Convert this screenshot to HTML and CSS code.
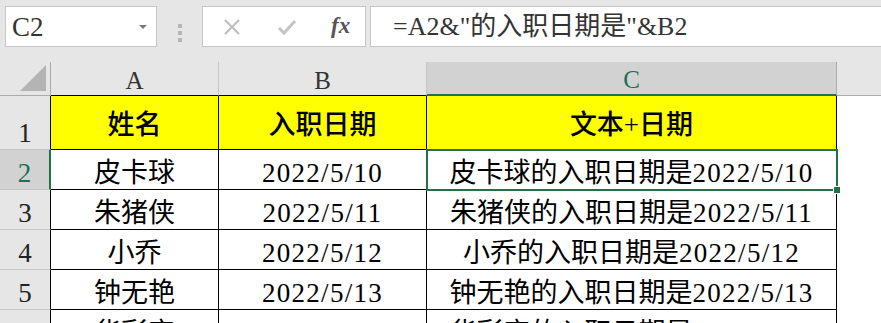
FILE: index.html
```html
<!DOCTYPE html>
<html lang="zh-CN">
<head>
    <meta charset="UTF-8">
    <meta name="viewport" content="width=device-width, initial-scale=1.0">
    <title>文本+日期</title>
    <link rel="stylesheet" href="styles.css">
</head>
<body>
    <!-- formula bar -->
    <div class="formula-bar">
        <div class="name-box">
            <span class="cell-ref">C2</span>
            <span class="drop"></span>
        </div>
        <div class="grip"><i></i><i></i><i></i></div>
        <div class="btn-box">
            <svg class="ico" width="18" height="18" viewBox="0 0 18 18">
                <path d="M2 2 L16 16 M16 2 L2 16" stroke="#bdbdbd" stroke-width="2" fill="none"/>
            </svg>
            <svg class="ico" width="20" height="18" viewBox="0 0 20 18">
                <path d="M2 10 L7 15 L18 3" stroke="#c4c4c4" stroke-width="3" fill="none"/>
            </svg>
            <span class="fx">fx</span>
        </div>
        <div class="formula">=A2&amp;"的入职日期是"&amp;B2</div>
    </div>

    <!-- sheet -->
    <div class="sheet">
        <div class="corner"><span class="tri"></span></div>
        <div class="ch">A</div>
        <div class="ch">B</div>
        <div class="ch active">C</div>
        <div class="ch rest"></div>

        <div class="rh">1</div>
        <div class="cell head">姓名</div>
        <div class="cell head">入职日期</div>
        <div class="cell head">文本+日期</div>
        <div class="blank"></div>

        <div class="rh active">2</div>
        <div class="cell">皮卡球</div>
        <div class="cell"><span class="num">2022/5/10</span></div>
        <div class="cell sel">皮卡球的入职日期是<span class="num">2022/5/10</span></div>
        <div class="blank"></div>

        <div class="rh">3</div>
        <div class="cell">朱猪侠</div>
        <div class="cell"><span class="num">2022/5/11</span></div>
        <div class="cell">朱猪侠的入职日期是<span class="num">2022/5/11</span></div>
        <div class="blank"></div>

        <div class="rh">4</div>
        <div class="cell">小乔</div>
        <div class="cell"><span class="num">2022/5/12</span></div>
        <div class="cell">小乔的入职日期是<span class="num">2022/5/12</span></div>
        <div class="blank"></div>

        <div class="rh">5</div>
        <div class="cell">钟无艳</div>
        <div class="cell"><span class="num">2022/5/13</span></div>
        <div class="cell">钟无艳的入职日期是<span class="num">2022/5/13</span></div>
        <div class="blank"></div>

        <div class="rh">6</div>
        <div class="cell">华彩宝</div>
        <div class="cell"><span class="num">2022/5/14</span></div>
        <div class="cell">华彩宝的入职日期是<span class="num">2022/5/14</span></div>
        <div class="blank"></div>
    </div>
</body>
</html>
```

FILE: styles.css
```css
body {
    margin: 0;
    background: #e6e6e6;
    font-family: "Liberation Serif", "Noto Sans CJK SC", serif;
    overflow: hidden;
}

/* formula bar */
.formula-bar {
    display: flex;
    height: 62px;
    padding: 6px 0 0 5px;
    box-sizing: border-box;
}
.name-box {
    width: 152px;
    height: 41px;
    box-sizing: border-box;
    background: #fff;
    border: 1px solid #c6c6c6;
    display: flex;
    align-items: center;
    padding: 2px 9px 0 6px;
}
.cell-ref {
    flex: 1;
    font-size: 27px;
    color: #333;
}
.drop {
    width: 0;
    height: 0;
    border-left: 4px solid transparent;
    border-right: 4px solid transparent;
    border-top: 4px solid #7a7a7a;
    margin-top: -2px;
}
.grip {
    width: 45px;
    display: flex;
    flex-direction: column;
    align-items: center;
    justify-content: center;
    gap: 3px;
    padding-bottom: 2px;
}
.grip i {
    width: 4px;
    height: 4px;
    background: #b5b5b5;
}
.btn-box {
    width: 164px;
    height: 41px;
    box-sizing: border-box;
    background: #fff;
    border: 1px solid #c6c6c6;
    display: flex;
    align-items: center;
    padding: 0 0 0 20px;
}
.btn-box .ico:first-child {
    margin-right: 36px;
}
.btn-box .ico:nth-child(2) {
    margin-right: 34px;
}
.fx {
    font-family: "Liberation Serif", serif;
    font-style: italic;
    font-weight: bold;
    font-size: 23px;
    color: #555;
    margin-top: -2px;
}
.formula {
    flex: 1;
    height: 41px;
    margin-left: 4px;
    box-sizing: border-box;
    background: #fff;
    border: 1px solid #c6c6c6;
    border-right: none;
    padding: 2px 0 0 22px;
    font-size: 26px;
    line-height: 36px;
    color: #333;
    white-space: nowrap;
}

/* sheet */
.sheet {
    display: grid;
    grid-template-columns: 51px 168px 208px 410px 1fr;
    grid-template-rows: 34px 54px 40px 40px 40px 40px 40px;
}
.corner {
    position: relative;
    border-bottom: 1px solid #ababab;
    border-right: 1px solid #ababab;
}
.tri {
    position: absolute;
    right: 4px;
    bottom: 4px;
    width: 0;
    height: 0;
    border-left: 26px solid transparent;
    border-bottom: 26px solid #b4b4b4;
}
.ch {
    border-right: 1px solid #c6c6c6;
    border-bottom: 1px solid #000;
    display: flex;
    justify-content: center;
    align-items: center;
    padding-top: 4px;
    font-size: 25px;
    color: #333;
}
.ch.active {
    background: #d2d2d2;
    color: #1e6e55;
    border-right-color: #ababab;
    border-bottom: 2px solid #217346;
}
.ch.rest {
    border-right: none;
    border-bottom: 1px solid #ababab;
}
.rh {
    border-bottom: 1px solid #c6c6c6;
    border-right: 1px solid #000;
    display: flex;
    justify-content: center;
    align-items: flex-end;
    font-size: 27px;
    line-height: 26px;
    padding-bottom: 3px;
    color: #222;
}
.rh.active {
    background: #d2d2d2;
    color: #1e6e55;
    border-right: 2px solid #217346;
}
.cell {
    background: #fff;
    border-right: 1px solid #000;
    border-bottom: 1px solid #000;
    display: flex;
    justify-content: center;
    align-items: center;
    padding-top: 7px;
    font-size: 27px;
    line-height: 1;
    color: #000;
    white-space: nowrap;
}
.cell.head {
    background: #ffff00;
    font-weight: 500;
    padding-top: 6px;
}
.num {
    letter-spacing: 1.3px;
}
.cell.sel {
    position: relative;
    outline: 2px solid #217346;
    outline-offset: -1px;
}
.cell.sel::after {
    content: "";
    position: absolute;
    right: -5px;
    bottom: -5px;
    width: 6px;
    height: 6px;
    background: #217346;
    border: 1px solid #fff;
}
.blank {
    background: #fff;
}
```
